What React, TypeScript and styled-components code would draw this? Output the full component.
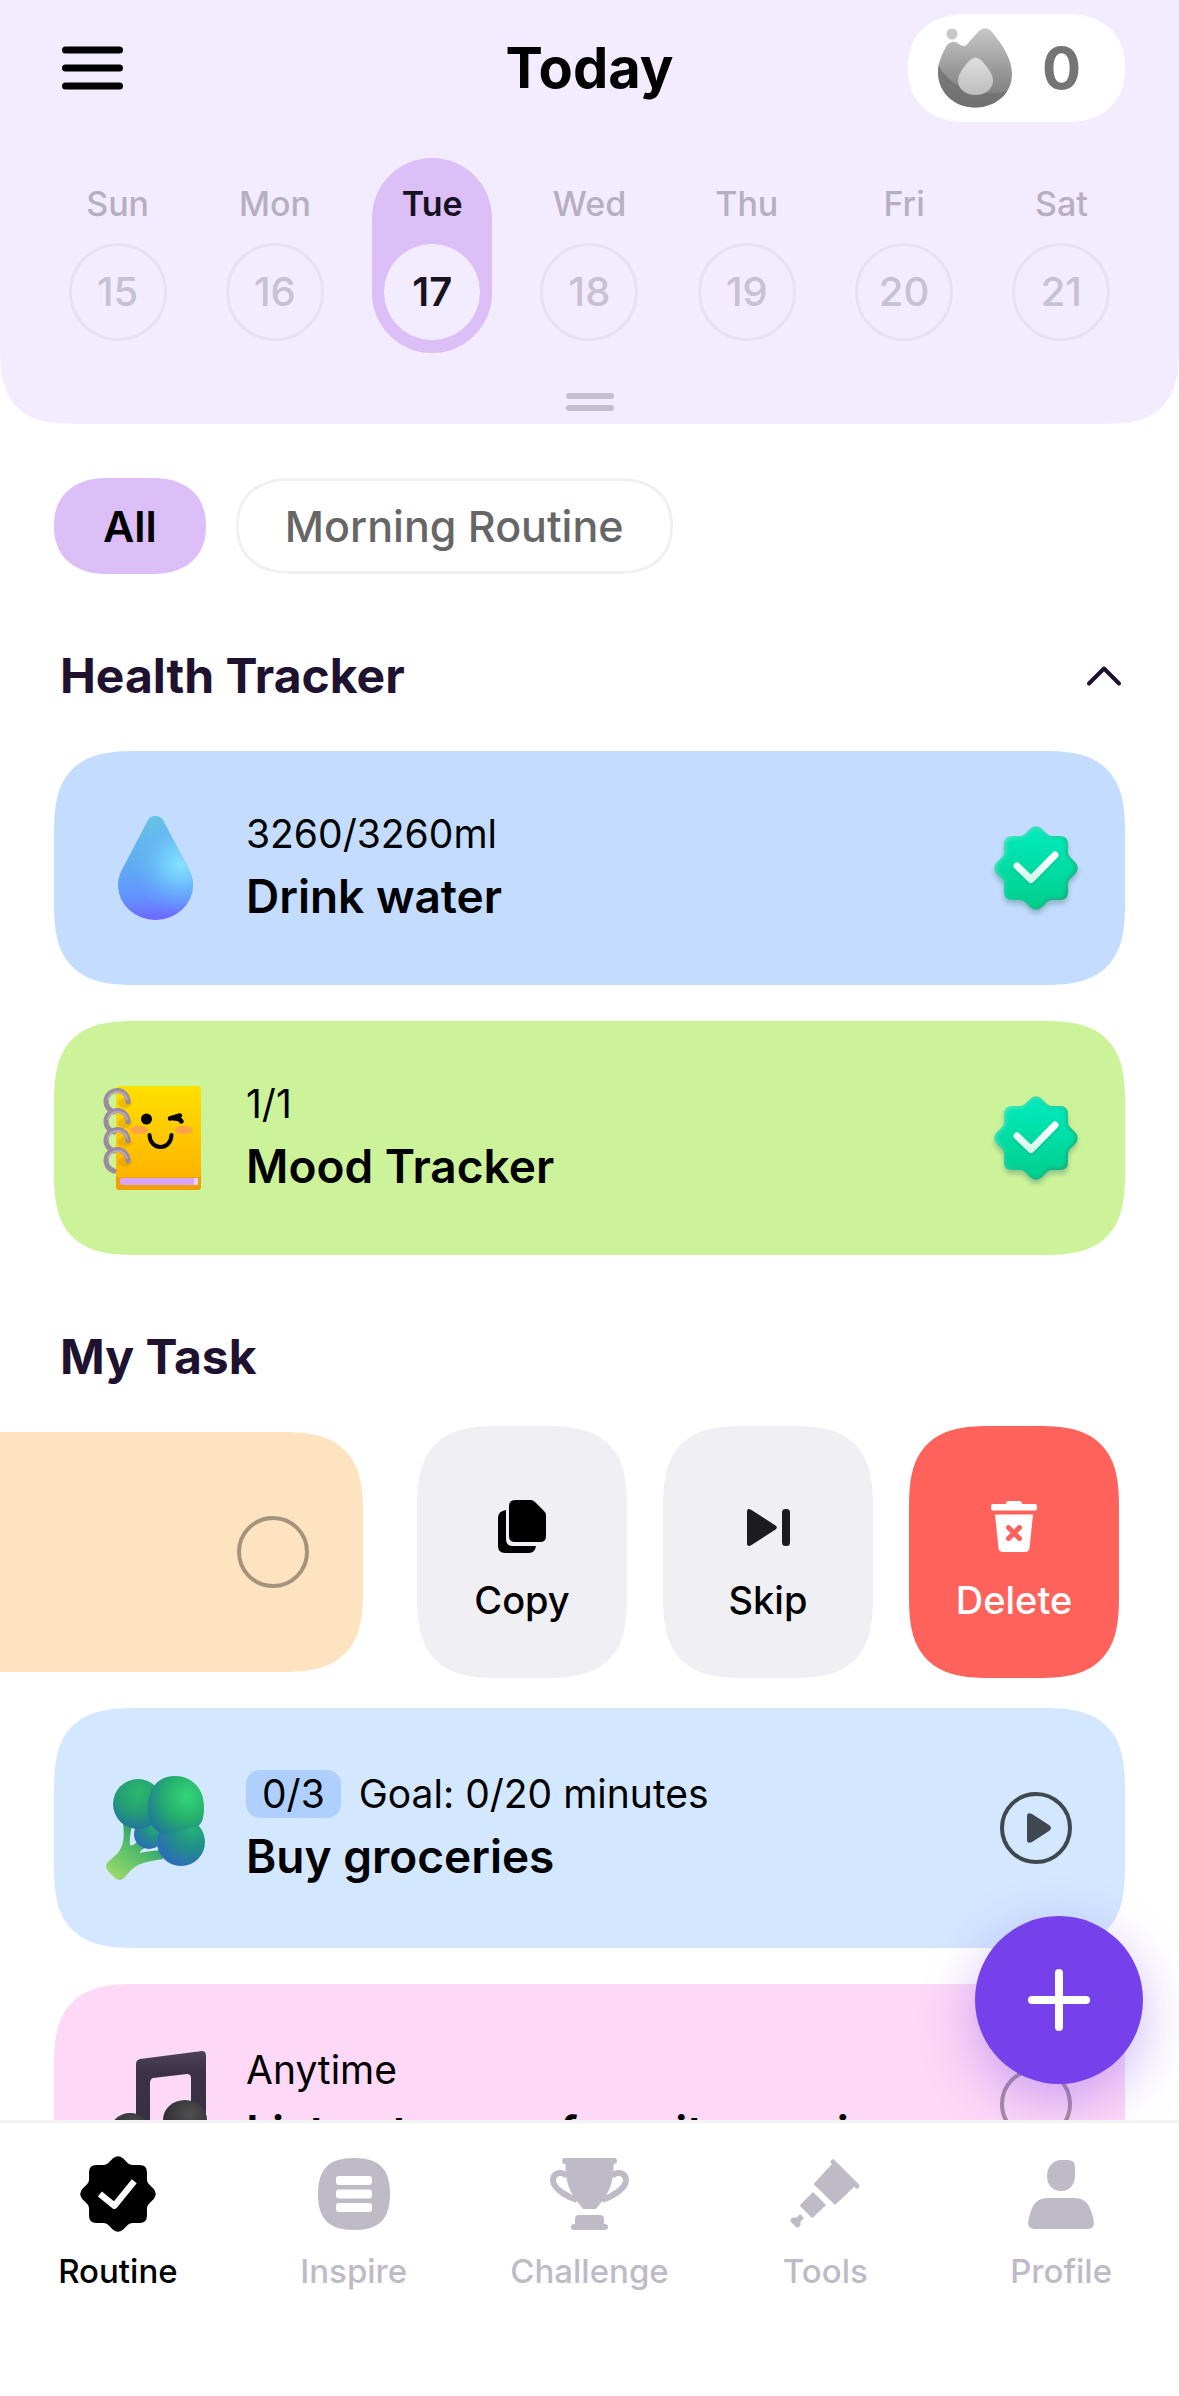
import React from "react";
import styled, { createGlobalStyle, css } from "styled-components";

const color = {
  ink: "#000000",
  heading: "#1f1230",
  lavender: "#f3ecff",
  selected: "#dbbff6",
  muted: "#bebbc7",
  accent: "#7640ea",
};

const squircle = (round: number, smooth: number) => css`
  border-radius: ${round}px;
  @supports (corner-shape: squircle) {
    border-radius: ${smooth}px;
    corner-shape: superellipse(1.5);
  }
`;

const pill = (x: number, y: number) => css`
  border-radius: ${y}px;
  @supports (corner-shape: squircle) {
    border-radius: ${x}px / ${y}px;
    corner-shape: superellipse(1.2);
  }
`;

const GlobalStyle = createGlobalStyle`
  *, *::before, *::after { box-sizing: border-box; }
  body {
    margin: 0;
    background: #fff;
    color: ${color.ink};
    font-family: Inter, "Open Sans", "Liberation Sans", sans-serif;
  }
  button {
    margin: 0;
    padding: 0;
    border: 0;
    background: none;
    color: inherit;
    font: inherit;
    cursor: pointer;
  }
  h1, h2, h3, p { margin: 0; }
  svg { display: block; flex: none; overflow: visible; }
`;

const Shell = styled.div`
  display: flex;
  flex-direction: column;
  height: 100vh;
`;

const Viewport = styled.div`
  position: relative;
  flex: 1;
  min-height: 0;
`;

const Scroller = styled.div`
  height: 100%;
  overflow-x: hidden;
  overflow-y: auto;
  scrollbar-width: none;
`;

const Header = styled.header`
  padding: 14px 39px 13px;
  background: ${color.lavender};
  border-radius: 0 0 66px 66px;
  @supports (corner-shape: squircle) {
    border-radius: 0 0 78px 78px;
    corner-shape: superellipse(1.5);
  }
`;

const TopBar = styled.div`
  display: grid;
  grid-template-columns: 1fr auto 1fr;
  align-items: center;
  padding: 0 15px;
`;

const MenuButton = styled.button`
  justify-self: start;
  padding: 8px;
`;

const Title = styled.h1`
  font-size: 56px;
  line-height: 66px;
  font-weight: 700;
`;

const Streak = styled.button`
  justify-self: end;
  display: flex;
  align-items: center;
  gap: 30px;
  height: 108px;
  padding: 0 44px 0 30px;
  background: #fff;
  color: #757575;
  font-size: 58px;
  font-weight: 700;
  ${pill(60, 54)}
`;

const Week = styled.div`
  display: grid;
  grid-template-columns: repeat(7, 1fr);
  justify-items: center;
  margin-top: 36px;
`;

const DayNumber = styled.span<{ $active: boolean }>`
  display: grid;
  place-items: center;
  width: 98px;
  height: 98px;
  border: ${(p) => (p.$active ? `1px solid ${color.selected}` : "3px solid #e8e0f3")};
  border-radius: 50%;
  background: ${color.lavender};
  color: ${(p) => (p.$active ? "#17121f" : "#c8c1d2")};
  font-size: 40px;
`;

const Day = styled.button<{ $active: boolean }>`
  display: flex;
  flex-direction: column;
  align-items: center;
  gap: 19px;
  width: 120px;
  padding: 26px 0 12px;
  border-radius: 60px;
  background: ${(p) => (p.$active ? color.selected : "transparent")};
  color: ${(p) => (p.$active ? "#17121f" : "#b6afbf")};
  font-size: 34px;
  line-height: 40px;
  font-weight: ${(p) => (p.$active ? 600 : 500)};
`;

const Handle = styled.button`
  display: flex;
  flex-direction: column;
  gap: 6px;
  margin: 40px auto 0;
`;

const HandleBar = styled.span`
  width: 48px;
  height: 6px;
  border-radius: 3px;
  background: #c5bdd0;
`;

const Main = styled.main`
  padding: 54px 54px 36px;
`;

const Chips = styled.div`
  display: flex;
  gap: 30px;
`;

const Chip = styled.button<{ $active?: boolean }>`
  height: 96px;
  padding: 0 46px;
  border: 3px solid ${(p) => (p.$active ? color.selected : "#f1f1f2")};
  background: ${(p) => (p.$active ? color.selected : "#fff")};
  color: ${(p) => (p.$active ? color.ink : "#666666")};
  font-size: 43px;
  font-weight: ${(p) => (p.$active ? 600 : 500)};
  ${pill(54, 48)}
`;

const SectionHead = styled.div`
  display: flex;
  align-items: center;
  justify-content: space-between;
  margin: 72px 0 45px;
  padding: 0 4px 0 6px;
`;

const SectionTitle = styled.h2`
  color: ${color.heading};
  font-size: 48px;
  line-height: 60px;
  font-weight: 700;
`;

const List = styled.div`
  display: flex;
  flex-direction: column;
  gap: 36px;
`;

const Card = styled.article<{ $bg: string; $tall?: boolean }>`
  display: flex;
  align-items: center;
  gap: 39px;
  min-height: ${(p) => (p.$tall ? 240 : 234)}px;
  padding: 0 47px 0 49px;
  background: ${(p) => p.$bg};
  ${squircle(66, 84)}
`;

const CardText = styled.div`
  flex: 1;
  min-width: 0;
  display: flex;
  flex-direction: column;
  gap: 8px;
`;

const Meta = styled.p`
  display: flex;
  align-items: center;
  gap: 18px;
  font-size: 39px;
  line-height: 48px;
`;

const Count = styled.span`
  padding: 0 16px;
  border-radius: 14px;
  background: #afd0ff;
`;

const CardTitle = styled.h3`
  font-size: 46px;
  line-height: 60px;
  font-weight: 600;
`;

const Trailing = styled.div`
  display: grid;
  place-items: center;
  width: 84px;
`;

const Tick = styled.input`
  appearance: none;
  width: 72px;
  height: 72px;
  margin: 0;
  border: 4px solid rgba(0, 0, 0, 0.35);
  border-radius: 50%;
`;

const PlayButton = styled.button`
  display: grid;
  place-items: center;
  width: 72px;
  height: 72px;
  padding-left: 6px;
  border: 4px solid #3f474f;
  border-radius: 50%;
`;

const SwipedRow = styled.div`
  display: flex;
  gap: 54px;
  margin: 0 -54px;
  padding-right: 60px;
`;

const SwipedCard = styled.article`
  flex: 1;
  display: flex;
  align-items: center;
  justify-content: flex-end;
  min-height: 240px;
  padding-right: 54px;
  background: #fee3c0;
  border-radius: 0 66px 66px 0;
  @supports (corner-shape: squircle) {
    border-radius: 0 84px 84px 0;
    corner-shape: superellipse(1.5);
  }
`;

const SwipeActions = styled.div`
  display: flex;
  gap: 36px;
  margin: -6px 0;
`;

const SwipeAction = styled.button<{ $danger?: boolean }>`
  display: flex;
  flex-direction: column;
  align-items: center;
  justify-content: center;
  gap: 22px;
  width: 210px;
  padding-top: 20px;
  background: ${(p) => (p.$danger ? "#ff625b" : "#f0eff4")};
  color: ${(p) => (p.$danger ? "#fff" : color.ink)};
  font-size: 38px;
  line-height: 48px;
  font-weight: 500;
  ${squircle(66, 84)}
`;

const IconSlot = styled.span`
  display: grid;
  place-items: center;
  height: 54px;
`;

const AddButton = styled.button`
  position: absolute;
  right: 36px;
  bottom: 36px;
  display: grid;
  place-items: center;
  width: 168px;
  height: 168px;
  border-radius: 50%;
  background: ${color.accent};
  box-shadow: 0 18px 54px rgba(118, 64, 234, 0.36);
`;

const TabBar = styled.nav`
  position: relative;
  display: grid;
  grid-template-columns: repeat(5, 1fr);
  padding: 29px 0 105px;
  border-top: 3px solid #f2f2f3;
  background: #fff;
`;

const Tab = styled.a<{ $active: boolean }>`
  display: flex;
  flex-direction: column;
  align-items: center;
  gap: 15px;
  color: ${(p) => (p.$active ? color.ink : color.muted)};
  font-size: 33px;
  line-height: 40px;
  font-weight: 500;
  text-decoration: none;
`;

const TabIcon = styled.span`
  display: grid;
  place-items: center;
  height: 84px;
`;

const SEAL =
  "M18 10H26Q29 10 31 8L36.5 2.5Q42-2 47.5 2.5L53 8Q55 10 58 10H66Q74 10 74 18V26Q74 29 76 31L81.5 36.5Q86 42 81.5 47.5L76 53Q74 55 74 58V66Q74 74 66 74H58Q55 74 53 76L47.5 81.5Q42 86 36.5 81.5L31 76Q29 74 26 74H18Q10 74 10 66V58Q10 55 8 53L2.5 47.5Q-2 42 2.5 36.5L8 31Q10 29 10 26V18Q10 10 18 10Z";

const FlameIcon = () => (
  <svg width="74" height="80" viewBox="0 0 74 80" aria-hidden="true">
    <defs>
      <linearGradient id="flame" x1="0" y1="0" x2="0" y2="1">
        <stop offset="0" stopColor="#c8c8c8" />
        <stop offset="0.5" stopColor="#9b9b9b" />
        <stop offset="1" stopColor="#747474" />
      </linearGradient>
      <linearGradient id="flameCore" x1="0" y1="0" x2="0" y2="1">
        <stop offset="0" stopColor="#dedede" />
        <stop offset="1" stopColor="#bdbdbd" />
      </linearGradient>
      <clipPath id="flameClip">
        <path d="M9 17Q15 11 21 16Q27 21 31 14L41 3Q48-3 54 4C64 16 74 31 74 46C74 66 57 79.500 37 79.500S0 65 0 44C0 34 5 24 9 17Z" />
      </clipPath>
    </defs>
    <circle cx="14" cy="6" r="5.500" fill="#c8c8c8" />
    <g clipPath="url(#flameClip)">
      <rect width="74" height="80" fill="url(#flame)" />
      <path d="M0 36C10 58 40 72 74 62V80H0Z" fill="#6f6f6f" opacity="0.75" />
    </g>
    <path d="M31 33Q37.500 26 44 33C50 40 55 46 55 53C55 61 47 67 37.500 67S20 61 20 53C20 46 25 40 31 33Z" fill="url(#flameCore)" />
  </svg>
);

const DropIcon = () => (
  <svg width="104" height="104" viewBox="0 0 104 104" aria-hidden="true">
    <defs>
      <linearGradient id="dropBase" x1="0" y1="0" x2="0" y2="1">
        <stop offset="0" stopColor="#66c3e6" />
        <stop offset="0.5" stopColor="#5fabf2" />
        <stop offset="0.8" stopColor="#6490ff" />
        <stop offset="1" stopColor="#6f67ff" />
      </linearGradient>
      <radialGradient id="dropShine" gradientUnits="userSpaceOnUse" cx="78" cy="48" r="48">
        <stop offset="0" stopColor="#84e4ff" />
        <stop offset="0.4" stopColor="#78d2ff" stopOpacity="0.7" />
        <stop offset="0.75" stopColor="#6cbcff" stopOpacity="0.3" />
        <stop offset="1" stopColor="#6db8ff" stopOpacity="0" />
      </radialGradient>
    </defs>
    <path d="M45 4C48-1.500 57-1.500 60 4L82 46C88 57 90 62 90 69A37.500 35 0 0 1 15 69C15 62 17 57 23 46Z" fill="url(#dropBase)" />
    <path d="M45 4C48-1.500 57-1.500 60 4L82 46C88 57 90 62 90 69A37.500 35 0 0 1 15 69C15 62 17 57 23 46Z" fill="url(#dropShine)" />
  </svg>
);

const NotebookIcon = () => (
  <svg width="104" height="104" viewBox="0 0 104 104" fill="none" strokeLinecap="round" aria-hidden="true">
    <defs>
      <linearGradient id="cover" x1="0" y1="0" x2="0" y2="1">
        <stop offset="0" stopColor="#ffe000" />
        <stop offset="1" stopColor="#ffb400" />
      </linearGradient>
    </defs>
    <rect x="13" y="84" width="85" height="20" rx="3" fill="#f0a000" />
    <rect x="17" y="92" width="78" height="7" rx="2" fill="#d9a4f5" />
    <rect x="91" y="92" width="4" height="7" fill="#ecd0fa" />
    <rect x="13" y="0" width="85" height="91" rx="3" fill="url(#cover)" />
    {[16, 36, 55, 75].map((y) => (
      <g key={y}>
        <ellipse cx="22" cy={y + 1} rx="7" ry="5" fill="#c88b00" opacity="0.35" />
        <path d={`M25 ${y}A11 11 0 1 0 11 ${y + 10}`} stroke="#9b8b9f" strokeWidth="5" />
        <path d={`M24 ${y - 3}A10 10 0 0 0 5 ${y - 3}`} stroke="#b9a9bd" strokeWidth="2" />
      </g>
    ))}
    <ellipse cx="36" cy="44" rx="9" ry="4" fill="#ffa24a" />
    <ellipse cx="81" cy="44" rx="9" ry="4" fill="#ffa24a" />
    <circle cx="43.500" cy="33" r="5.500" fill="#000" />
    <path d="M77 29.500L67 32.500M71 32.500Q77 32 78.500 35.500" stroke="#000" strokeWidth="4.500" />
    <path d="M46.500 49C47 65 68 65 68.500 49" stroke="#000" strokeWidth="4" />
  </svg>
);

const BroccoliIcon = () => (
  <svg width="104" height="104" viewBox="0 0 104 104" aria-hidden="true">
    <defs>
      <radialGradient id="floretA" cx="0.5" cy="0.25" r="0.8">
        <stop offset="0" stopColor="#2cb86b" />
        <stop offset="0.55" stopColor="#239b76" />
        <stop offset="1" stopColor="#2370a2" />
      </radialGradient>
      <radialGradient id="floretB" cx="0.7" cy="0.35" r="0.8">
        <stop offset="0" stopColor="#34d67c" />
        <stop offset="0.5" stopColor="#25b06c" />
        <stop offset="1" stopColor="#21779c" />
      </radialGradient>
      <radialGradient id="floretC" cx="0.75" cy="0.2" r="0.85">
        <stop offset="0" stopColor="#25b478" />
        <stop offset="0.5" stopColor="#219088" />
        <stop offset="1" stopColor="#2c6cb8" />
      </radialGradient>
      <linearGradient id="stalk" gradientUnits="userSpaceOnUse" x1="45" y1="58" x2="12" y2="102">
        <stop offset="0" stopColor="#249c68" />
        <stop offset="0.4" stopColor="#55bd69" />
        <stop offset="1" stopColor="#9ad86c" />
      </linearGradient>
    </defs>
    <path d="M20 48C22 62 20 70 15 77L5 86Q1 90 5 95L12 102Q17 106 21 102Q29 92 35 89Q44 85 60 83V74Q46 75 37 77Q36 75 42 72L34 66Q29 71 27 69Q26 62 29 50Z" fill="url(#stalk)" />
    <ellipse cx="46" cy="58" rx="15" ry="15" fill="url(#floretC)" />
    <ellipse cx="35" cy="28" rx="25" ry="25" fill="url(#floretA)" />
    <ellipse cx="78" cy="66" rx="24" ry="24" fill="url(#floretC)" />
    <path d="M72 0C90 0 101 14 101 30C101 45 98 50 92 51C80 52 70 57 60 58C48 53 44 44 45 30C46 13 54 0 72 0Z" fill="url(#floretB)" />
  </svg>
);

const MusicIcon = () => (
  <svg width="104" height="104" viewBox="0 0 104 104" aria-hidden="true">
    <defs>
      <linearGradient id="noteBeam" x1="0" y1="0" x2="0" y2="1">
        <stop offset="0" stopColor="#4d4359" />
        <stop offset="0.25" stopColor="#3c3248" />
        <stop offset="1" stopColor="#352e40" />
      </linearGradient>
      <radialGradient id="noteHead" cx="0.6" cy="0.35" r="0.7">
        <stop offset="0" stopColor="#505053" />
        <stop offset="1" stopColor="#29292c" />
      </radialGradient>
    </defs>
    <path d="M37 7L99-1Q103-1 103 4V72H88V26Q88 22 84 22L50 26Q47 27 47 31V84H33V12Q33 8 37 7Z" fill="url(#noteBeam)" />
    <ellipse cx="82" cy="68" rx="22" ry="20" fill="url(#noteHead)" />
    <ellipse cx="27" cy="80" rx="20" ry="19" fill="url(#noteHead)" />
  </svg>
);

const DoneBadge = () => (
  <svg width="84" height="84" viewBox="0 0 84 84" fill="none" aria-hidden="true">
    <defs>
      <linearGradient id="sealEdge" x1="0" y1="0" x2="1" y2="1">
        <stop offset="0" stopColor="#5ceec9" />
        <stop offset="0.5" stopColor="#12d19c" />
        <stop offset="1" stopColor="#0ea873" />
      </linearGradient>
      <linearGradient id="sealFace" x1="0" y1="0" x2="0" y2="1">
        <stop offset="0" stopColor="#00eabd" />
        <stop offset="1" stopColor="#00d08c" />
      </linearGradient>
      <linearGradient id="sealTick" x1="0" y1="0" x2="0" y2="1">
        <stop offset="0" stopColor="#ffffff" />
        <stop offset="1" stopColor="#d5f8ea" />
      </linearGradient>
      <filter id="soft" x="-20%" y="-20%" width="140%" height="140%">
        <feGaussianBlur stdDeviation="1.500" />
      </filter>
      <filter id="sealShadow" x="-20%" y="-20%" width="140%" height="140%">
        <feGaussianBlur stdDeviation="2.500" />
      </filter>
    </defs>
    <path d={SEAL} fill="#2f6f66" opacity="0.35" transform="translate(0 4)" filter="url(#sealShadow)" />
    <path d={SEAL} fill="url(#sealEdge)" />
    <path d={SEAL} fill="url(#sealFace)" transform="translate(3.4 3.4) scale(.92)" filter="url(#soft)" />
    <path d="M23 42L37 55L61 30" stroke="#00a877" strokeOpacity="0.5" strokeWidth="7" strokeLinecap="round" strokeLinejoin="round" filter="url(#soft)" />
    <path d="M23 40L37 53.500L61 29" stroke="url(#sealTick)" strokeWidth="7" strokeLinecap="round" strokeLinejoin="round" />
  </svg>
);

const CopyIcon = () => (
  <svg width="48" height="54" viewBox="0 0 48 54" fill="currentColor" aria-hidden="true">
    <path d="M17 0H33Q35 0 37 2L46 11Q48 13 48 15V36Q48 42 42 42H17Q11 42 11 36V6Q11 0 17 0Z" />
    <path d="M8 10Q0 11 0 18V46Q0 53 7 53H31Q37 53 38 46H15Q8 46 8 39Z" />
  </svg>
);

const SkipIcon = () => (
  <svg width="43" height="37" viewBox="0 0 43 37" fill="#1b1b20" aria-hidden="true">
    <path d="M0 3Q0-1.500 4.500 1L28.500 16.500Q31 18.500 28.500 20.500L4.500 36Q0 38.500 0 34Z" />
    <rect x="35" y="0" width="8" height="37" rx="3.500" />
  </svg>
);

const TrashIcon = () => (
  <svg width="46" height="52" viewBox="0 0 46 52" fill="currentColor" aria-hidden="true">
    <path d="M15 3Q15 0 18 0H28Q31 0 31 3H44Q46 3 46 5V7.500Q46 9.500 44 9.500H2Q0 9.500 0 7.500V5Q0 3 2 3Z" />
    <path d="M4 13.500H42L38.500 47Q38 51 34 51H12Q8 51 7.500 47Z" />
    <path d="M17.500 26.500L28.500 37.500M28.500 26.500L17.500 37.500" stroke="#ff625b" strokeWidth="5" strokeLinecap="round" />
  </svg>
);

const RoutineIcon = () => (
  <svg width="76" height="76" viewBox="0 0 84 84" fill="currentColor" aria-hidden="true">
    <path d={SEAL} />
    <path d="M22 42L38 55L60 28" fill="none" stroke="#fff" strokeWidth="7" strokeLinejoin="round" />
  </svg>
);

const InspireIcon = () => (
  <svg width="72" height="72" viewBox="0 0 72 72" fill="currentColor" aria-hidden="true">
    <path d="M36 0C61 0 72 11 72 36S61 72 36 72S0 61 0 36S11 0 36 0Z" />
    <g fill="#fff">
      <rect x="18" y="18" width="36" height="9" rx="3" />
      <rect x="18" y="31.500" width="36" height="9" rx="3" />
      <rect x="18" y="45" width="36" height="9" rx="3" />
    </g>
  </svg>
);

const ChallengeIcon = () => (
  <svg width="79" height="72" viewBox="0 0 79 72" fill="currentColor" aria-hidden="true">
    <rect x="12" y="0" width="55" height="6" rx="3" />
    <path d="M15.500 3V14Q17 26 21 34L26 42L33 51H46L53 42L58 34Q62 26 63.500 14V3Z" />
    <path d="M17 18C12 13 3 14 3 23C4 31 16 38 27 42M62 18C67 13 76 14 76 23C75 31 63 38 52 42" fill="none" stroke="currentColor" strokeWidth="6" />
    <path d="M29 57H50Q54 57 54 61V66H55Q58 66 58 69T55 72H24Q21 72 21 69T24 66H25V61Q25 57 29 57Z" />
  </svg>
);

const ToolsIcon = () => (
  <svg width="70" height="70" viewBox="0 0 70 70" fill="currentColor" strokeLinejoin="round" aria-hidden="true">
    <path d="M43 3L67 27" stroke="currentColor" strokeWidth="5" strokeLinecap="round" />
    <path d="M42 5L65 27L46 45Q45 46 44 45L24.500 26Q23.500 25 24.500 24Z" />
    <path d="M23 33L36 46L23 58.500Q22 59 21 58L10.500 47.500Q10 46.500 10.500 45.500Z" />
    <path d="M10 55L14 59L10.500 62.500V66Q8 71 5 67L1 63Q-1 59 4 58.500H7Z" />
  </svg>
);

const ProfileIcon = () => (
  <svg width="66" height="69" viewBox="0 0 66 69" fill="currentColor" aria-hidden="true">
    <path d="M33 0H40Q47 0 47 7V16C47 25 41 31 33 31S19 25 19 16S25 0 33 0Z" />
    <path d="M20 38H46C56 38 61 43 64 54L66 62Q66 69 60 69H6Q0 69 0 62L2 54C5 43 10 38 20 38Z" />
  </svg>
);

const days = [
  ["Sun", 15],
  ["Mon", 16],
  ["Tue", 17],
  ["Wed", 18],
  ["Thu", 19],
  ["Fri", 20],
  ["Sat", 21],
] as const;

const tabs = [
  { label: "Routine", Icon: RoutineIcon },
  { label: "Inspire", Icon: InspireIcon },
  { label: "Challenge", Icon: ChallengeIcon },
  { label: "Tools", Icon: ToolsIcon },
  { label: "Profile", Icon: ProfileIcon },
];

export default function App() {
  return (
    <Shell>
      <GlobalStyle />
      <Viewport>
        <Scroller>
          <Header>
            <TopBar>
              <MenuButton aria-label="Menu">
                <svg width="61" height="44" viewBox="0 0 61 44" stroke="#000" strokeWidth="7" strokeLinecap="round" aria-hidden="true">
                  <path d="M3.500 4H57.500M3.500 22H57.500M3.500 40H57.500" />
                </svg>
              </MenuButton>
              <Title>Today</Title>
              <Streak>
                <FlameIcon />
                <span>0</span>
              </Streak>
            </TopBar>
            <Week>
              {days.map(([name, date]) => (
                <Day key={name} $active={date === 17}>
                  <span>{name}</span>
                  <DayNumber $active={date === 17}>{date}</DayNumber>
                </Day>
              ))}
            </Week>
            <Handle aria-label="Expand calendar">
              <HandleBar />
              <HandleBar />
            </Handle>
          </Header>

          <Main>
            <Chips>
              <Chip $active>All</Chip>
              <Chip>Morning Routine</Chip>
            </Chips>

            <SectionHead>
              <SectionTitle>Health Tracker</SectionTitle>
              <button aria-label="Collapse">
                <svg width="34" height="20" viewBox="0 0 34 20" fill="none" stroke={color.heading} strokeWidth="4" strokeLinecap="round" strokeLinejoin="round" aria-hidden="true">
                  <path d="M2 17.500L17 2.500L32 17.500" />
                </svg>
              </button>
            </SectionHead>
            <List>
              <Card $bg="#c3dcff">
                <DropIcon />
                <CardText>
                  <Meta>3260/3260ml</Meta>
                  <CardTitle>Drink water</CardTitle>
                </CardText>
                <Trailing>
                  <DoneBadge />
                </Trailing>
              </Card>
              <Card $bg="#cdf39a">
                <NotebookIcon />
                <CardText>
                  <Meta>1/1</Meta>
                  <CardTitle>Mood Tracker</CardTitle>
                </CardText>
                <Trailing>
                  <DoneBadge />
                </Trailing>
              </Card>
            </List>

            <SectionHead>
              <SectionTitle>My Task</SectionTitle>
            </SectionHead>
            <List>
              <SwipedRow>
                <SwipedCard>
                  <Tick type="checkbox" aria-label="Mark task done" />
                </SwipedCard>
                <SwipeActions>
                  <SwipeAction>
                    <IconSlot>
                      <CopyIcon />
                    </IconSlot>
                    Copy
                  </SwipeAction>
                  <SwipeAction>
                    <IconSlot>
                      <SkipIcon />
                    </IconSlot>
                    Skip
                  </SwipeAction>
                  <SwipeAction $danger>
                    <IconSlot>
                      <TrashIcon />
                    </IconSlot>
                    Delete
                  </SwipeAction>
                </SwipeActions>
              </SwipedRow>
              <Card $bg="#d3e7ff" $tall>
                <BroccoliIcon />
                <CardText>
                  <Meta>
                    <Count>0/3</Count>
                    <span>Goal: 0/20 minutes</span>
                  </Meta>
                  <CardTitle>Buy groceries</CardTitle>
                </CardText>
                <Trailing>
                  <PlayButton aria-label="Start timer">
                    <svg width="24" height="30" viewBox="0 0 24 30" fill="#3f474f" aria-hidden="true">
                      <path d="M0 3.500Q0-1.500 5 1L22 12Q26 15 22 18L5 29Q0 31.500 0 26.500Z" />
                    </svg>
                  </PlayButton>
                </Trailing>
              </Card>
              <Card $bg="#fdd8f7" $tall>
                <MusicIcon />
                <CardText>
                  <Meta>Anytime</Meta>
                  <CardTitle>Listen to your favorite music</CardTitle>
                </CardText>
                <Trailing>
                  <Tick type="checkbox" aria-label="Mark music task done" />
                </Trailing>
              </Card>
            </List>
          </Main>
        </Scroller>
        <AddButton aria-label="Add task">
          <svg width="62" height="62" viewBox="0 0 62 62" stroke="#fff" strokeWidth="8" strokeLinecap="round" aria-hidden="true">
            <path d="M31 4V58M4 31H58" />
          </svg>
        </AddButton>
      </Viewport>
      <TabBar>
        {tabs.map(({ label, Icon }) => (
          <Tab key={label} href={`#${label.toLowerCase()}`} $active={label === "Routine"}>
            <TabIcon>
              <Icon />
            </TabIcon>
            {label}
          </Tab>
        ))}
      </TabBar>
    </Shell>
  );
}
